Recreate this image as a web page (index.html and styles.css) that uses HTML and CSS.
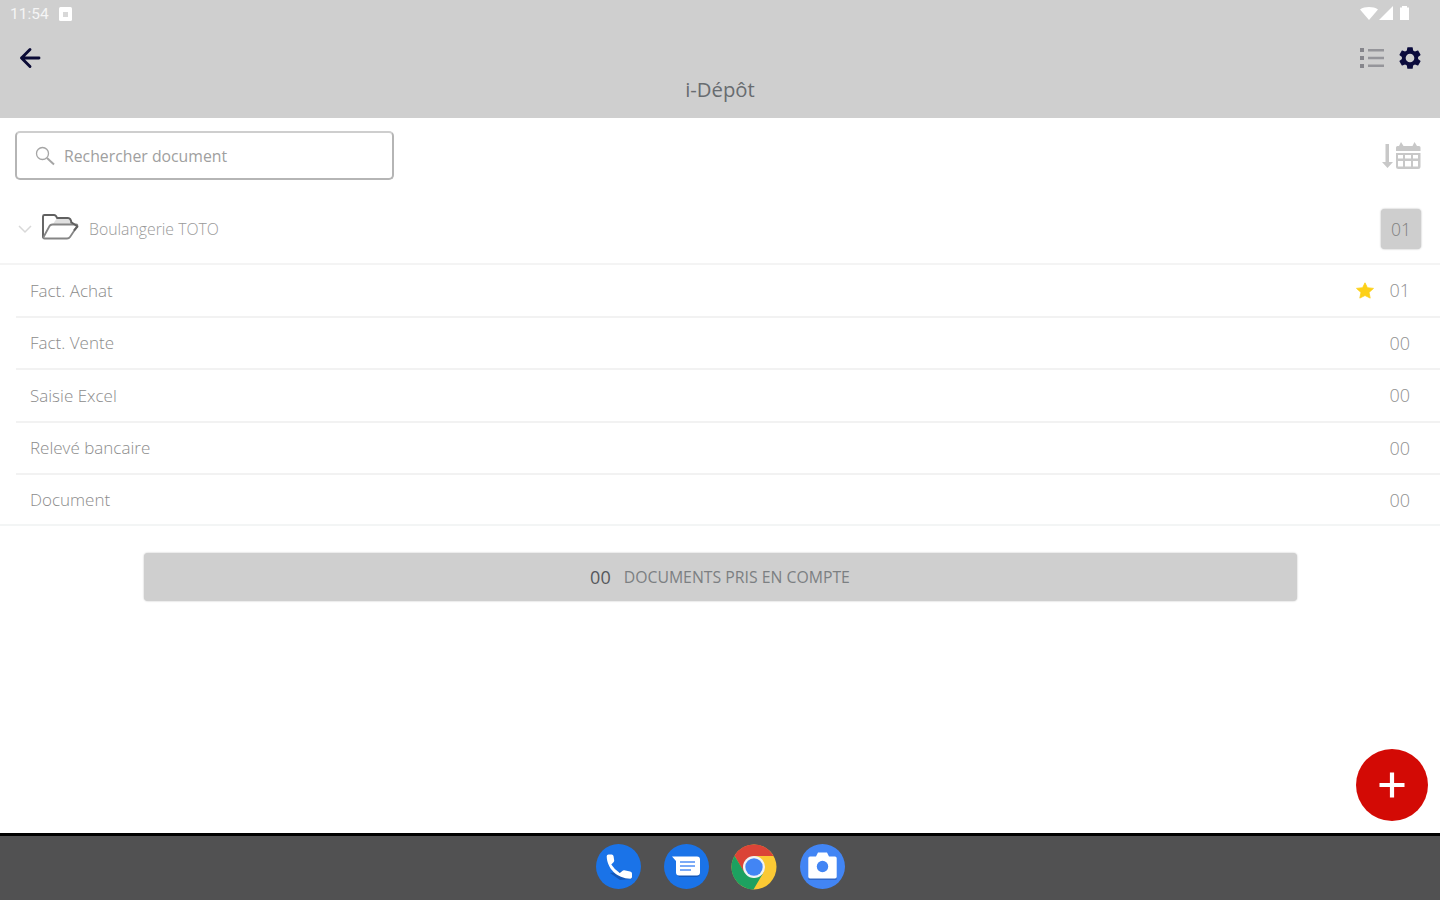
FILE: index.html
```html
<!DOCTYPE html>
<html lang="fr">
<head>
<meta charset="utf-8">
<title>i-Dépôt</title>
<link rel="stylesheet" href="styles.css">
</head>
<body>
<div class="screen">
  <header class="header">
    <div class="status">
      <span class="clock">11:54</span>
      <svg class="status-app" width="13" height="14" viewBox="0 0 13 14"><rect width="13" height="14" rx="1.5" fill="#fff"/><rect x="4" y="5" width="5" height="5" fill="#d8d8d8"/></svg>
      <svg class="status-right" width="52" height="16" viewBox="0 0 52 16" fill="#fff"><path d="M0 3.5C5 .3 13 .3 18 3.500L9 14z"/><path d="M33 0V14H19z"/><path d="M42 1.500h2V0h5v1.500h2V14H42z" transform="translate(-2 0)"/></svg>
    </div>
    <div class="toolbar">
      <svg width="24" height="24" viewBox="0 0 24 24" fill="none" stroke="#0b0b35" stroke-width="2.900" stroke-linecap="round" stroke-linejoin="round"><path d="M21 12H3.500M12 3.500L3.500 12l8.500 8.500"/></svg>
      <div class="tools">
        <svg width="24" height="22" viewBox="0 0 24 22"><path d="M0 1h4v4H0zM0 9h4v4H0zM0 17h4v4H0z" fill="#85858b"/><path d="M8 2h16v2.500H8zM8 9.800h16v2.500H8zM8 17.500h16V20H8z" fill="#95959a"/></svg>
        <svg width="26" height="26" viewBox="0 0 24 24"><path fill="#0b0b3c" d="M19.430 12.980c.04-.32.07-.64.07-.98s-.03-.66-.07-.98l2.110-1.650c.19-.15.24-.42.12-.64l-2-3.460c-.12-.22-.39-.3-.61-.22l-2.490 1c-.52-.4-1.080-.73-1.690-.98l-.38-2.650A.488.488 0 0 0 14 2h-4c-.25 0-.46.18-.49.42l-.38 2.650c-.61.25-1.170.59-1.690.98l-2.490-1c-.23-.09-.49 0-.61.22l-2 3.460c-.13.22-.07.49.12.64l2.110 1.650c-.04.32-.07.65-.07.98s.03.66.07.98l-2.110 1.650c-.19.15-.24.42-.12.64l2 3.460c.12.22.39.3.61.22l2.490-1c.52.4 1.080.73 1.690.98l.38 2.650c.03.24.24.42.49.42h4c.25 0 .46-.18.49-.42l.38-2.650c.61-.25 1.170-.59 1.690-.98l2.490 1c.23.09.49 0 .61-.22l2-3.460c.12-.22.07-.49-.12-.64zM12 16a4 4 0 1 1 0-8 4 4 0 0 1 0 8z"/></svg>
      </div>
    </div>
    <h1 class="title">i-Dépôt</h1>
  </header>

  <main class="main">
    <div class="search-row">
      <div class="search">
        <svg width="20" height="20" viewBox="0 0 20 20" fill="none" stroke="#a5a5a5" stroke-width="1.300"><circle cx="7.500" cy="7.500" r="6"/><path d="M12 12l7 6.500" stroke-width="2"/></svg>
        <span class="search-text">Rechercher document</span>
      </div>
      <svg width="40" height="30" viewBox="0 0 40 30" fill="#c8c8c8"><path d="M4.500 3h3.500v18H12l-5.500 6L1 21h3.500z"/><path d="M15 10V6.500q0-1.500 1.500-1.500H18l2-4 2.500 4h9l2-4 2.500 4h2q1.500 0 1.500 1.500V10z"/><path fill-rule="evenodd" d="M15 12h24.500v13.500q0 2.500-2.500 2.500H17.500Q15 28 15 25.500zM17 14v3.500h5V14zm7 0v3.500h6V14zm8 0v3.500h5V14zM17 20v5.500h5V20zm7 0v5.500h6V20zm8 0v5.500h5V20z"/></svg>
    </div>

    <div class="group">
      <svg class="chevron" width="14" height="10" viewBox="0 0 14 10" fill="none" stroke="#d8d8d8" stroke-width="1.500"><path d="M1 2l6 6 6-6"/></svg>
      <svg class="folder" width="38" height="28" viewBox="0 0 38 28" fill="none" stroke-linejoin="round"><path d="M16 5h11.500l3.500 6H12z" fill="#e0e0e0"/><path d="M2 25V3.500Q2 2 3.500 2H13q2 0 3 3h11q3 0 3.500 5.500" stroke="#606060" stroke-width="1.900"/><path d="M2 25L8 14q1-2.500 3.500-2.500H35q2 0 1 2L29 24q-1 1.500-3 1.500H3.500Q2 25.500 2 24" stroke="#858585" stroke-width="1.800" fill="#fff"/><path d="M30 9l6.500 4.500-3.500 4" stroke="#606060" stroke-width="1.900"/></svg>
      <span class="group-name">Boulangerie TOTO</span>
      <span class="badge">01</span>
    </div>

    <ul class="list">
      <li class="row"><span class="label">Fact. Achat</span><svg class="star" width="18" height="17" viewBox="0 0 18 17"><path fill="#fdd017" stroke="#fdd017" stroke-width=".8" stroke-linejoin="round" d="M9 .8l2.400 4.900 6.100.7-4.500 4 1.200 5.700L9 13.500 3.800 16.100l1.200-5.700-4.500-4 6.100-.7z"/></svg><span class="count">01</span></li>
      <li class="row"><span class="label">Fact. Vente</span><span class="count">00</span></li>
      <li class="row"><span class="label">Saisie Excel</span><span class="count">00</span></li>
      <li class="row"><span class="label">Relevé bancaire</span><span class="count">00</span></li>
      <li class="row"><span class="label">Document</span><span class="count">00</span></li>
    </ul>

    <div class="summary"><span class="summary-count">00</span><span class="summary-text">DOCUMENTS PRIS EN COMPTE</span></div>
  </main>

  <div class="fab"><svg width="26" height="26" viewBox="0 0 26 26" stroke="#fff" stroke-width="4.200"><path d="M13 .5v25M.5 13h25"/></svg></div>

  <nav class="dock">
    <svg width="45" height="45" viewBox="0 0 45 45"><circle cx="22.500" cy="22.500" r="22.500" fill="#1a73e8"/><path d="M14 29l10 7 12-1v-3l-7-5z" fill="#1558b8"/><path d="M12.500 10.500h3.200q1.500 0 1.800 1.600l.7 4.200q.2 1.200-.7 2l-2.200 2.300q3.500 5.500 8.500 8.500l2.500-2.200q.9-.8 2-.6l5.800 1.100q1.900.4 1.900 2V33q0 1.700-1.700 1.700C21 34.500 11 24.500 10.700 12.300q0-1.800 1.800-1.800z" fill="#fff"/></svg>
    <svg width="45" height="45" viewBox="0 0 45 45"><circle cx="22.500" cy="22.500" r="22.500" fill="#1a73e8"/><path d="M12 29l3 4h17q4 0 4-4z" fill="#1558b8"/><path d="M8 12.500h25q3 0 3 3v13q0 3-3 3H15q-3 0-3-3V17z" fill="#fff"/><path d="M16 18h15M16 22h15M16 26h11" stroke="#7baaf7" stroke-width="1.900"/></svg>
    <svg width="46" height="46" viewBox="0 0 46 46"><circle cx="23" cy="23" r="22.500" fill="#fbc934"/><path d="M3.500 11.750A22.500 22.500 0 0 1 42.500 12H23l-9.500 17z" fill="#db4437"/><path d="M3.500 11.750A22.500 22.500 0 0 0 22.500 45.500L32.500 28.500 23 34l-9.500-5.500z" fill="#1da160"/><circle cx="23" cy="23" r="11" fill="#f1f3f4"/><circle cx="23" cy="23" r="8.700" fill="#4285f4"/></svg>
    <svg width="45" height="45" viewBox="0 0 45 45"><circle cx="22.500" cy="22.500" r="22.500" fill="#4285f4"/><path d="M8.500 33h28v3h-28z" fill="#3269c8"/><path d="M10 12.500h6l2-4h9l2 4h6q1.700 0 1.700 1.700v18.600q0 1.700-1.700 1.700H10q-1.700 0-1.700-1.700V14.200q0-1.700 1.700-1.700z" fill="#fff"/><circle cx="22.500" cy="22.500" r="5.700" fill="#4285f4"/></svg>
  </nav>
</div>
</body>
</html>
```

FILE: styles.css
```css
* { box-sizing: border-box; }
body { margin: 0; font-family: "Open Sans", "Noto Sans", sans-serif; font-weight: 300; }
svg { display: block; flex: none; }
.screen { position: relative; display: flex; flex-direction: column; width: 1440px; height: 900px; overflow: hidden; background: #fff; }
.header { height: 118px; flex: none; background: #cfcfcf; }
.status { display: flex; align-items: center; height: 28px; padding: 0 28px 0 10px; }
.clock { width: 49px; font: 400 15.5px/28px Roboto, sans-serif; color: #f5f5f5; }
.status-right { margin-left: auto; }
.toolbar { display: flex; align-items: center; justify-content: space-between; height: 60px; padding: 0 17px 0 18px; margin-bottom: -12px; }
.tools { display: flex; align-items: center; gap: 13px; }
.title { margin: 0; text-align: center; font-size: 20.3px; font-weight: 400; line-height: 26px; color: #686c70; }
.main { flex: 1; }
.search-row { display: flex; align-items: center; justify-content: space-between; padding: 13px 19px 0 15px; }
.search { display: flex; align-items: center; gap: 9px; width: 379px; height: 49px; padding-left: 18px; border: 2px solid #b5b5b5; border-top-color: #cecece; border-radius: 5px; }
.search-text { font-size: 15.8px; font-weight: 400; color: #a0a0a0; }
.group { display: flex; align-items: center; height: 85px; padding: 14px 19px 0; border-bottom: 2px solid #f4f4f4; }
.chevron { margin-left: -1px; }
.folder { margin: -4px 10px 0 9px; }
.group-name { font-size: 15.8px; color: #999; }
.badge { width: 40px; height: 40px; margin-left: auto; border-radius: 4px; background: #cecece; text-align: center; font-size: 17.5px; line-height: 40px; color: #808080; box-shadow: 0 0 2px #aaa; }
.list { margin: 0; padding: 0; list-style: none; border-bottom: 2px solid #f3f5f5; }
.row { display: flex; align-items: center; height: 52.500px; margin-left: 16px; padding: 0 30px 0 14px; border-bottom: 2px solid #f2f2f2; }
.row:last-child { height: 49px; border-bottom: 0; }
.label { margin-right: auto; font-size: 17px; color: #8c8c8c; }
.star { margin-right: 15px; }
.count { font-size: 18px; color: #909090; }
.summary { display: flex; align-items: center; justify-content: center; gap: 13px; width: 1153px; height: 48px; margin: 27px auto 0; border-radius: 4px; background: #cfcfcf; box-shadow: 0 0 2px #bbb; }
.summary-count { font-size: 18px; font-weight: 400; color: #55585c; }
.summary-text { font-size: 15.8px; font-weight: 400; color: #7c7f82; }
.fab { position: absolute; left: 1356px; top: 748.500px; display: grid; place-items: center; width: 72px; height: 72px; border-radius: 50%; background: #d30a05; }
.dock { display: flex; align-items: center; justify-content: center; gap: 22.500px; height: 67px; flex: none; padding: 0 0 3px 1px; border-top: 3px solid #000; background: #515152; }
```
